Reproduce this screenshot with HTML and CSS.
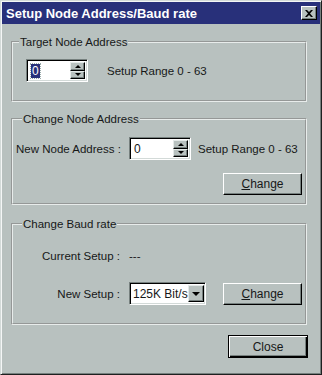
FILE: index.html
```html
<!DOCTYPE html>
<html lang="en">
  <head>
    <meta charset="UTF-8" />
    <meta name="viewport" content="width=device-width, initial-scale=1.0" />
    <title>Setup Node Address/Baud rate</title>
    <link rel="stylesheet" href="styles.css">
  </head>
  <body>
    <div class="window">
      <div class="titlebar">
        <span class="title">Setup Node Address/Baud rate</span>
        <button class="close-x">
          <svg width="8" height="7" viewBox="0 0 8 7">
            <path d="M0 0h2l2 2 2-2h2L5 3.5 8 7H6L4 5 2 7H0l3-3.5z" fill="#000" />
          </svg>
        </button>
      </div>

      <div class="content">
        <fieldset class="group target">
          <legend>Target Node Address</legend>
          <div class="row">
            <div class="spin">
              <span class="field"><span class="sel">0</span></span>
              <div class="spin-btns">
                <span class="spin-btn"><i class="tri up"></i></span>
                <span class="spin-btn"><i class="tri down"></i></span>
              </div>
            </div>
            <span class="hint wide">Setup Range 0 - 63</span>
          </div>
        </fieldset>

        <fieldset class="group change-node">
          <legend>Change Node Address</legend>
          <div class="row">
            <span class="label">New Node Address :</span>
            <div class="spin">
              <span class="field">0</span>
              <div class="spin-btns">
                <span class="spin-btn"><i class="tri up"></i></span>
                <span class="spin-btn"><i class="tri down"></i></span>
              </div>
            </div>
            <span class="hint">Setup Range 0 - 63</span>
          </div>
          <div class="row end">
            <button class="btn"><u>C</u>hange</button>
          </div>
        </fieldset>

        <fieldset class="group baud">
          <legend>Change Baud rate</legend>
          <div class="row">
            <span class="label">Current Setup :</span>
            <span class="value">---</span>
          </div>
          <div class="row second">
            <span class="label">New Setup :</span>
            <div class="combo">
              <span class="field">125K Bit/s</span>
              <span class="drop-btn"><i class="tri down big"></i></span>
            </div>
            <button class="btn push"><u>C</u>hange</button>
          </div>
        </fieldset>

        <div class="footer">
          <button class="btn default">Close</button>
        </div>
      </div>
    </div>
  </body>
</html>
```

FILE: styles.css
```css
* {
  margin: 0;
  padding: 0;
  box-sizing: border-box;
}

body {
  width: 322px;
  height: 375px;
  font-family: "Liberation Sans", Arial, sans-serif;
  font-size: 11.5px;
  color: #161818;
  background: #b8c1bf;
  white-space: nowrap;
}

.window {
  width: 322px;
  height: 375px;
  padding: 1px;
  background: #b8c1bf;
  border: 1px solid;
  border-color: #d3dad8 #1e2020 #1e2020 #d3dad8;
  box-shadow: inset 1px 1px #f4f6f6, inset -1px -1px #76807e;
}

.titlebar {
  height: 22px;
  display: flex;
  align-items: center;
  justify-content: space-between;
  padding: 0 3px 0 4px;
  background: #28307a;
}

.title {
  color: #fff;
  font-weight: bold;
  font-size: 13px;
}

.close-x {
  width: 16px;
  height: 14px;
  display: flex;
  align-items: center;
  justify-content: center;
  background: #b8c1bf;
  border: 1px solid;
  border-color: #fff #000 #000 #fff;
  box-shadow: inset -1px -1px #76807e;
}

.content {
  padding: 11px 13px 0 9px;
}

.group {
  border: 2px groove #e8eceb;
  padding: 10px 0 18px 0;
}

.group legend {
  margin-left: 6px;
  padding: 0 1px;
  line-height: 14px;
}

.target .row {
  padding-left: 13px;
}

.change-node {
  margin-top: 10px;
  padding: 11px 3px 8px 3px;
}

.baud {
  margin-top: 12px;
  padding: 19px 3px 18px 3px;
}

.row {
  display: flex;
  align-items: center;
}

.row.end {
  justify-content: flex-end;
  margin-top: 13px;
}

.row.second {
  margin-top: 20px;
}

.label {
  width: 104px;
  text-align: right;
  margin-right: 9px;
}

.hint {
  margin-left: 7px;
}

.hint.wide {
  margin-left: 19px;
}

.field {
  flex: 1;
  height: 100%;
  display: flex;
  align-items: center;
  padding-left: 2px;
  background: #fff;
  font-size: 12px;
}

.spin,
.combo {
  display: flex;
  height: 23px;
  padding: 2px;
  background: #fff;
  border: 1px solid;
  border-color: #76807e #fff #fff #76807e;
  box-shadow: inset 1px 1px #000, inset -1px -1px #d3dad8;
}

.spin {
  width: 62px;
}

.combo {
  width: 77px;
}

.combo .field {
  padding-left: 1px;
}

.sel {
  background: #28307a;
  color: #fff;
  padding: 0 1px;
  outline: 1px dotted #9aa;
}

.spin-btns {
  width: 15px;
  display: flex;
  flex-direction: column;
}

.spin-btn,
.drop-btn {
  flex: 1;
  display: flex;
  align-items: center;
  justify-content: center;
  background: #b8c1bf;
  border: 1px solid;
  border-color: #e4e9e8 #000 #000 #e4e9e8;
  box-shadow: inset -1px -1px #76807e;
}

.drop-btn {
  flex: none;
  width: 16px;
}

.tri {
  width: 0;
  height: 0;
  border-left: 3px solid transparent;
  border-right: 3px solid transparent;
}

.tri.up {
  border-bottom: 3px solid #000;
}

.tri.down {
  border-top: 3px solid #000;
}

.tri.big {
  border-left-width: 4px;
  border-right-width: 4px;
  border-top-width: 4px;
}

.btn {
  width: 79px;
  height: 22px;
  font-family: inherit;
  font-size: 12px;
  color: #161818;
  background: #b8c1bf;
  border: 1px solid;
  border-color: #fff #000 #000 #fff;
  box-shadow: inset -1px -1px #76807e;
}

.btn.push {
  margin-left: auto;
}

.footer {
  display: flex;
  justify-content: flex-end;
  margin-top: 10px;
  margin-right: -1px;
}

.btn.default {
  width: 80px;
  height: 23px;
  border: 1px solid #000;
  box-shadow: inset 1px 1px #fff, inset -1px -1px #000, inset -2px -2px #76807e;
}
```
